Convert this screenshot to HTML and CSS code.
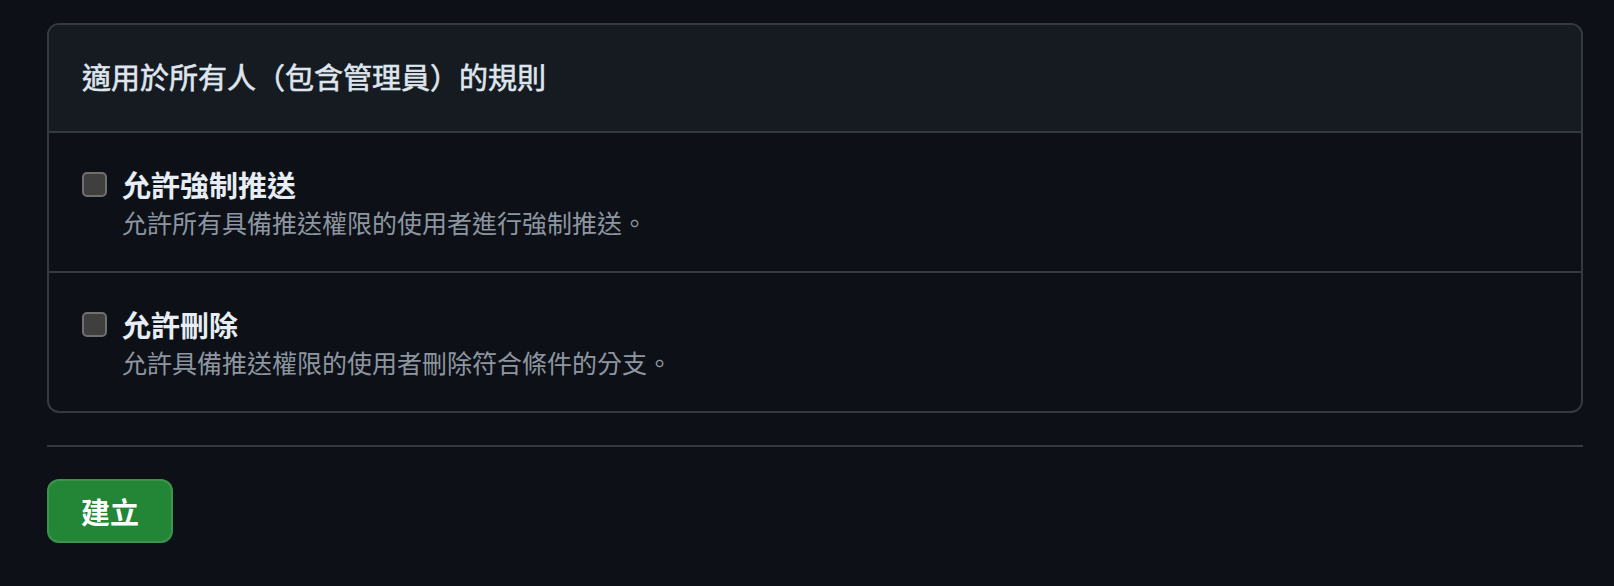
FILE: index.html
```html
<!DOCTYPE html>
<html lang="zh-Hant">

<head>
    <meta charset="UTF-8">
    <meta name="viewport" content="width=device-width, initial-scale=1.0">
    <title>分支保護規則</title>
    <link rel="stylesheet" href="styles.css">
</head>

<body>

    <!-- Rules box -->
    <div class="box">
        <div class="box-header">
            <h2>適用於所有人（包含管理員）的規則</h2>
        </div>

        <div class="box-row">
            <input type="checkbox" id="allow-force-push" class="check">
            <div class="row-text">
                <label for="allow-force-push" class="row-label">允許強制推送</label>
                <p class="row-note">允許所有具備推送權限的使用者進行強制推送。</p>
            </div>
        </div>

        <div class="box-row">
            <input type="checkbox" id="allow-delete" class="check">
            <div class="row-text">
                <label for="allow-delete" class="row-label">允許刪除</label>
                <p class="row-note">允許具備推送權限的使用者刪除符合條件的分支。</p>
            </div>
        </div>
    </div>

    <hr class="divider">

    <button type="submit" class="create-btn">建立</button>

</body>

</html>
```

FILE: styles.css
```css
/* Page */
body {
    font-family: "Noto Sans CJK TC", "Noto Sans", sans-serif;
    background-color: #0d1117;
    color: #e6edf3;
    margin: 0;
    padding: 23px 31px 0 47px;
}

/* Box */
.box {
    border: 2px solid #353a42;
    border-radius: 12px;
    overflow: hidden;
}

.box-header {
    background-color: #161b22;
    height: 106px;
    padding: 0 33px;
    display: flex;
    align-items: center;
    border-bottom: 2px solid #353a42;
}

.box-header h2 {
    margin: 0 0 4px;
    font-size: 29px;
    font-weight: 400;
    -webkit-text-stroke: 0.6px #dfe5ec;
    color: #dfe5ec;
}

.box-row {
    display: flex;
    align-items: flex-start;
    padding: 32px 33px 30px;
}

.box-row + .box-row {
    border-top: 2px solid #353a42;
}

/* Checkbox */
.check {
    appearance: none;
    width: 25px;
    height: 25px;
    margin: 7px 15px 0 0;
    box-sizing: border-box;
    background-color: #3f3f3f;
    border: 2px solid #6f6f6f;
    border-radius: 5px;
    flex-shrink: 0;
}

.row-text {
    display: flex;
    flex-direction: column;
}

.row-label {
    font-size: 29px;
    font-weight: 700;
    line-height: 38px;
    color: #e6edf3;
}

.row-note {
    margin: 0;
    font-size: 25px;
    line-height: 38px;
    color: #8d96a0;
}

/* Divider */
.divider {
    border: none;
    border-top: 2px solid #353a42;
    margin: 32px 0 32px;
}

/* Button */
.create-btn {
    font-family: inherit;
    font-size: 29px;
    font-weight: 700;
    color: #ffffff;
    background-color: #238636;
    border: 2px solid rgba(240, 246, 252, 0.12);
    border-radius: 12px;
    width: 126px;
    height: 64px;
    padding: 0;
    cursor: pointer;
}
```
